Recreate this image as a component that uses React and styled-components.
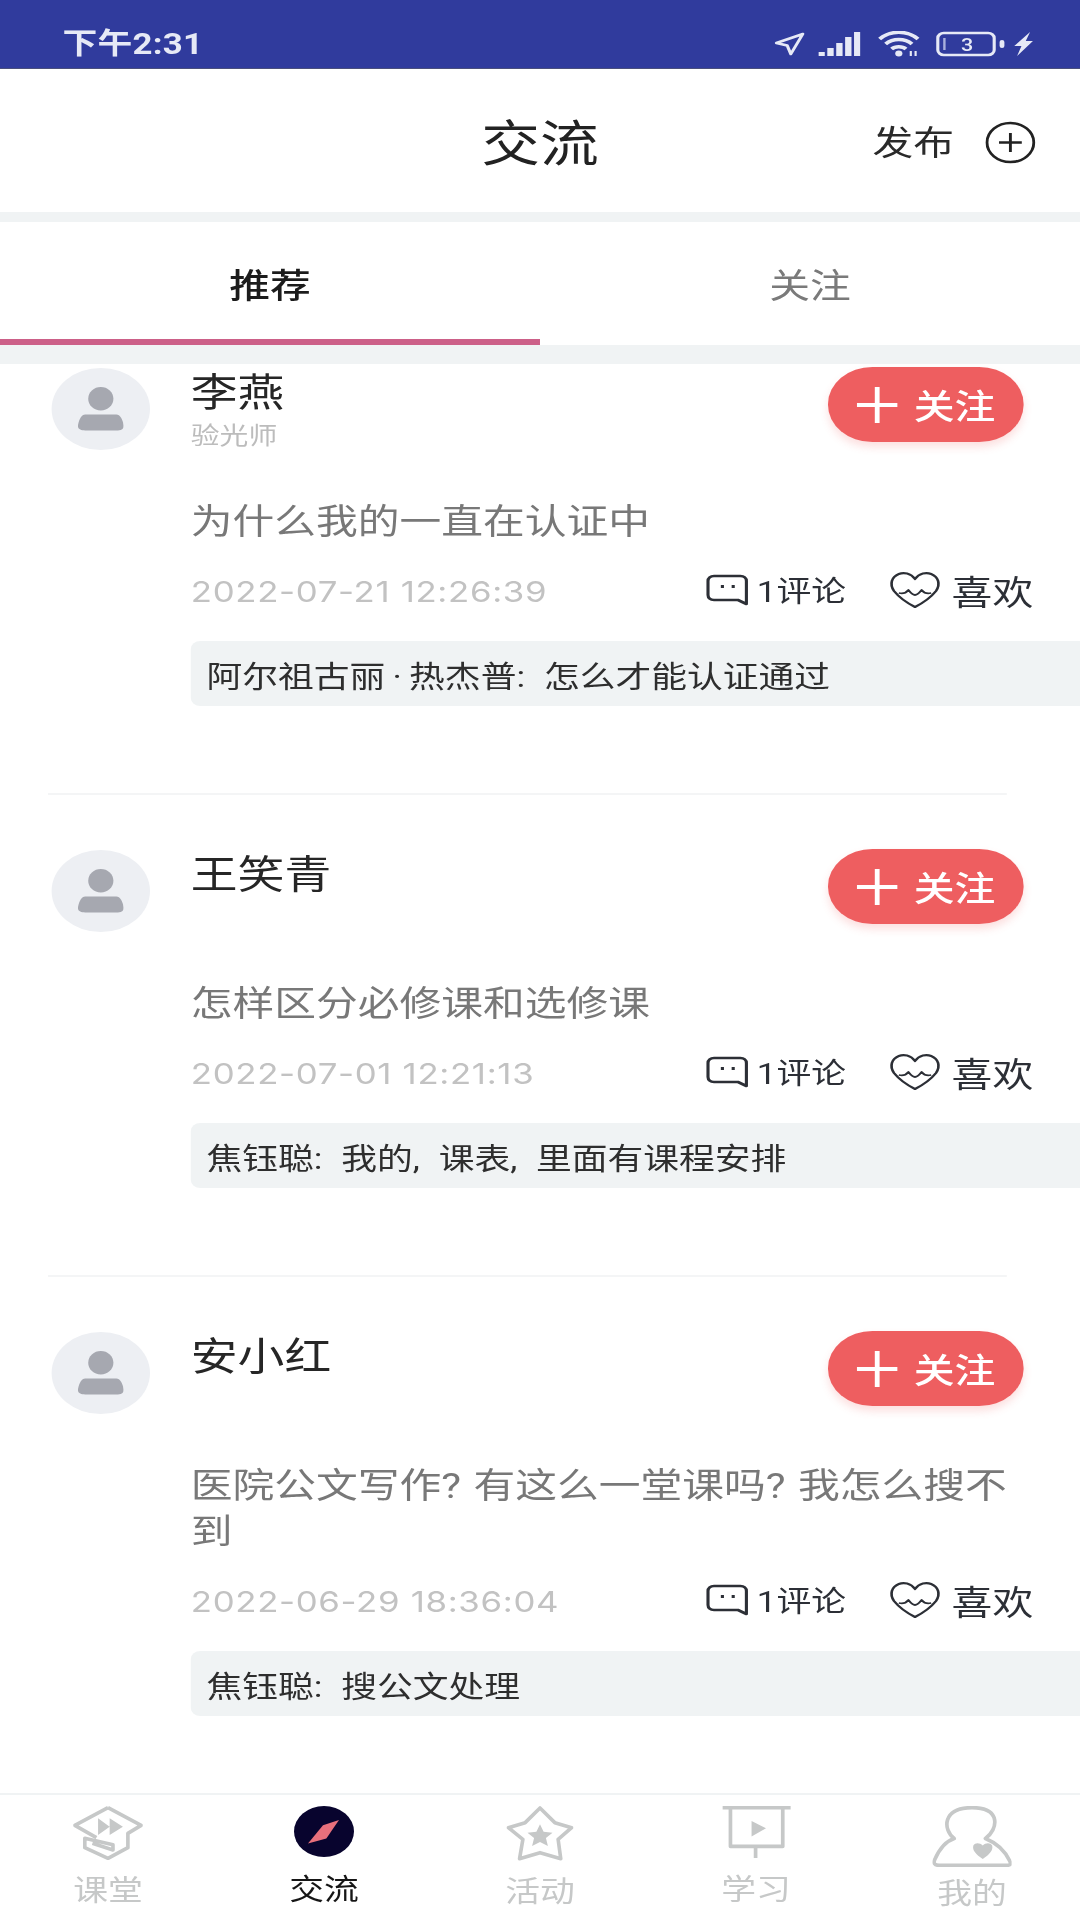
import * as React from "react";
import styled, { createGlobalStyle } from "styled-components";

const GlobalStyle = createGlobalStyle`
    html, body {
        margin: 0;
        padding: 0;
        width: 1080px;
        height: 1920px;
        overflow: hidden;
        background: #ffffff;
    }
    * {
        box-sizing: border-box;
    }
`;

// the reference is a soft, horizontally stretched capture, so the whole page is laid out at 900px and stretched
const Frame = styled.div`
    width: 900px;
    height: 1920px;
    transform: scaleX(1.2);
    transform-origin: 0 0;
    filter: blur(0.5px);
    display: flex;
    flex-direction: column;
    background: #ffffff;
    font-family: Roboto, "Noto Sans CJK SC", sans-serif;
`;

const StatusBar = styled.div`
    height: 69px;
    flex: none;
    background: #303b9d;
    border-bottom: 1px solid #4a4f7c;
    padding: 27px 38px 0 52px;
    display: flex;
    justify-content: space-between;
    align-items: flex-start;
    color: #e6e9f6;
`;

const Time = styled.div`
    font-size: 29px;
    line-height: 34px;
    font-weight: 700;
    letter-spacing: 0.2px;
`;

const StatusIcons = styled.div`
    display: flex;
    align-items: center;
    height: 26px;
    margin-top: 4px;
    svg {
        display: block;
    }
`;

const Header = styled.div`
    height: 143px;
    flex: none;
    display: flex;
    align-items: center;
    justify-content: center;
    position: relative;
    font-size: 49px;
    padding-bottom: 2px;
    color: #222222;
`;

const Publish = styled.div`
    position: absolute;
    right: 37px;
    top: 50px;
    display: flex;
    align-items: center;
    gap: 26px;
    font-size: 34px;
    line-height: 43px;
    color: #2a2a2a;
`;

const PublishLabel = styled.span`
    padding-top: 3px;
`;

const Band = styled.div`
    flex: none;
    height: ${(p) => p.$height}px;
    background: #f0f3f4;
`;

const Tabs = styled.div`
    height: 123px;
    flex: none;
    display: flex;
`;

const Tab = styled.div`
    flex: 1;
    display: flex;
    align-items: center;
    justify-content: center;
    padding-top: 6px;
    font-size: 34px;
    font-weight: ${(p) => (p.$active ? 500 : 400)};
    color: ${(p) => (p.$active ? "#1c1c1c" : "#7a7a7a")};
    border-bottom: 6px solid ${(p) => (p.$active ? "#cc6088" : "transparent")};
`;

const List = styled.div`
    flex: 1;
    min-height: 0;
    overflow: hidden;
`;

const Scroller = styled.div`
    margin-top: -51px;
`;

const Card = styled.div`
    display: flex;
    gap: 34px;
    padding: 55px 0 0 43px;
    position: relative;
    &::after {
        content: "";
        position: absolute;
        left: 40px;
        bottom: 0;
        width: 799px;
        height: 2px;
        background: #f4f5f6;
    }
`;

const Avatar = styled.div`
    width: 82px;
    height: 82px;
    flex: none;
    border-radius: 50%;
    background: #edeff3;
    display: flex;
    align-items: center;
    justify-content: center;
`;

const CardBody = styled.div`
    flex: 1;
    min-width: 0;
    padding-bottom: 89px;
`;

const CardTop = styled.div`
    height: 82px;
    margin-bottom: 49px;
    display: flex;
    justify-content: space-between;
    align-items: flex-start;
    padding-right: 47px;
`;

const Name = styled.div`
    font-size: 39px;
    line-height: 46px;
    margin-top: 2px;
    color: #262626;
`;

const Role = styled.div`
    font-size: 24px;
    line-height: 30px;
    margin-top: 5px;
    color: #bcbcbc;
`;

const FollowButton = styled.div`
    width: 163px;
    height: 75px;
    margin-top: -1px;
    border-radius: 37px;
    background: #ee5e60;
    box-shadow: 0 5px 8px rgba(238, 94, 96, 0.2);
    color: #ffffff;
    display: flex;
    align-items: center;
    justify-content: center;
    gap: 14px;
    font-size: 34px;
    font-weight: 500;
    svg {
        display: block;
    }
`;

const Question = styled.div`
    font-size: 34.8px;
    line-height: 46px;
    word-spacing: 0.05em;
    color: #787878;
    padding-right: 45px;
`;

const Meta = styled.div`
    height: 60px;
    margin-top: 15px;
    display: flex;
    align-items: center;
    padding-right: 39px;
`;

const DateText = styled.div`
    font-family: Inter, sans-serif;
    font-size: 29px;
    letter-spacing: 0.55px;
    color: #c2c2c2;
    margin-right: auto;
    padding-top: 2px;
`;

const MetaItem = styled.div`
    display: flex;
    align-items: center;
    gap: ${(p) => p.$gap}px;
    margin-left: ${(p) => p.$left}px;
    font-size: ${(p) => p.$size}px;
    line-height: 40px;
    color: #2c2f36;
    svg {
        display: block;
        flex: none;
    }
`;

const MetaLabel = styled.span`
    padding-top: ${(p) => p.$drop}px;
`;

const Reply = styled.div`
    height: 65px;
    margin-top: 21px;
    padding-left: 13px;
    background: #f0f3f4;
    border-radius: 8px 0 0 8px;
    display: flex;
    align-items: center;
    font-size: 29.8px;
    word-spacing: 0.28em;
    color: #2e2e2e;
    white-space: pre;
`;

const BottomNav = styled.div`
    height: 127px;
    flex: none;
    display: grid;
    grid-template-columns: repeat(5, 1fr);
    border-top: 2px solid #f0f3f4;
    background: #ffffff;
`;

const NavItem = styled.div`
    display: flex;
    flex-direction: column;
    align-items: center;
    font-size: 29px;
    line-height: 34px;
    color: ${(p) => (p.$active ? "#161616" : "#c6c8c8")};
`;

const NavIcon = styled.div`
    height: 82px;
    padding-top: 11px;
    svg {
        display: block;
    }
`;

const NavLabel = styled.div`
    margin-top: ${(p) => p.$offset || 0}px;
`;

const LocationIcon = () => (
    <svg width="26" height="24" viewBox="0 0 26 24" fill="none" stroke="#e6e9f6" strokeWidth="2.6" strokeLinejoin="round">
        <path d="M24 2 L2 11 L11 13.5 L14 22 Z" />
    </svg>
);

const SignalIcon = () => (
    <svg width="35" height="26" viewBox="0 0 33 26" preserveAspectRatio="none" fill="#e6e9f6" style={{ marginLeft: 11 }}>
        <rect x="0" y="21" width="5" height="4" />
        <rect x="7" y="17" width="5" height="8" />
        <rect x="14" y="12" width="5" height="13" />
        <rect x="21" y="6" width="5" height="19" />
        <rect x="28" y="1" width="5" height="24" />
    </svg>
);

const WifiIcon = () => (
    <svg width="37" height="26" viewBox="0 0 37 26" fill="none" stroke="#e6e9f6" strokeWidth="3.4" style={{ marginLeft: 14 }}>
        <path d="M2 8 C11 -1 25 -1 34 8" />
        <path d="M7 13 C13 7 23 7 29 13" />
        <path d="M12 18 C15 15 21 15 24 18" />
        <circle cx="18" cy="22.5" r="3" fill="#e6e9f6" stroke="none" />
        <path d="M28 20 V25 M32 20 V25" strokeWidth="1.8" />
    </svg>
);

const BatteryIcon = () => (
    <svg width="58" height="26" viewBox="0 0 58 26" fill="none" style={{ marginLeft: 12 }}>
        <rect x="1.5" y="2" width="47" height="22" rx="5" stroke="#e6e9f6" strokeWidth="2.6" />
        <rect x="53" y="9" width="4" height="8" rx="2" fill="#e6e9f6" />
        <rect x="6" y="7" width="2" height="12" fill="#a9b0dc" />
        <text x="26" y="20" fontSize="18" fontWeight="500" textAnchor="middle" fill="#e6e9f6" fontFamily="Roboto, sans-serif">3</text>
    </svg>
);

const BoltIcon = () => (
    <svg width="18" height="24" viewBox="0 0 15 24" preserveAspectRatio="none" fill="#e6e9f6" style={{ marginLeft: 6 }}>
        <path d="M12 0 L1 14 H6 L3 24 L14 9 H9 Z" />
    </svg>
);

const PlusCircleIcon = () => (
    <svg width="42" height="43" viewBox="0 0 42 43" fill="none" stroke="#222222" strokeWidth="2.4">
        <circle cx="21" cy="21.5" r="19.5" />
        <path d="M21 12 V31 M11.5 21.5 H30.5" />
    </svg>
);

const PersonIcon = () => (
    <svg width="38" height="44" viewBox="0 0 38 44" fill="#a6a8b0">
        <ellipse cx="19" cy="11.7" rx="10.5" ry="11.7" />
        <path d="M6 27.5 H32 C35 27.5 37 32 38 38 C38.5 42 36 43.5 32 43.5 H6 C2 43.5 -0.5 42 0 38 C1 32 3 27.5 6 27.5 Z" />
    </svg>
);

const FollowPlus = () => (
    <svg width="34" height="36" viewBox="0 0 34 36" fill="none" stroke="#ffffff" strokeWidth="4">
        <path d="M17 0 V36 M0 18 H34" />
    </svg>
);

const CommentIcon = () => (
    <svg width="36" height="32" viewBox="0 0 36 32" fill="none" stroke="#2c2f36" strokeWidth="2.6" strokeLinejoin="round">
        <path d="M7 2 H29 C32 2 34 4 34 7 V30 L27 26 H7 C4 26 2 24 2 21 V7 C2 4 4 2 7 2 Z" />
        <path d="M14 11 V14 M23 11 V14" />
    </svg>
);

const HeartIcon = () => (
    <svg width="43" height="38" viewBox="0 0 43 38" fill="none" stroke="#2c2f36" strokeWidth="2.2" strokeLinejoin="round">
        <path d="M21.5 8 C18 2 12 1 8 3 C2 6 0 13 4 20 C8 26 15 32 21.5 36 C28 32 35 26 39 20 C43 13 41 6 35 3 C31 1 25 2 21.5 8 Z" />
        <path d="M8 22 C11 23 14 22 16 19 C18 22 20 24 21.5 24 C23 24 25 22 27 19 C29 22 32 23 35 22" strokeWidth="1.8" />
    </svg>
);

const CourseIcon = () => (
    <svg width="58" height="54" viewBox="0 0 210 162" preserveAspectRatio="none" fill="none" stroke="#c6c8c8" strokeWidth="11" strokeLinejoin="round">
        <path d="M105 5 L205 58 L165 82 V125 L105 157 L35 125 V97 L120 116 V132 L58 112" />
        <path d="M105 5 L5 58 L70 95" />
        <path d="M75 37 L110 62 L75 87 Z M110 37 L150 62 L110 87 Z" fill="#c6c8c8" stroke="none" />
    </svg>
);

const CompassIcon = () => (
    <svg width="50" height="51" viewBox="0 0 180 152" preserveAspectRatio="none">
        <ellipse cx="90" cy="76" rx="90" ry="76" fill="#08042e" />
        <path d="M135 42 L87 57 L42 112 L97 97 Z" fill="#e8707c" />
    </svg>
);

const StarIcon = () => (
    <svg width="56" height="55" viewBox="0 0 204 165" preserveAspectRatio="none" fill="none" stroke="#c6c8c8" strokeWidth="11" strokeLinejoin="round">
        <path d="M102 6 L147 50 L198 65 L157 100 L165 158 L102 140 L40 158 L50 100 L6 65 L57 50 Z" />
        <path d="M102 55 L113 77 L140 80 L120 96 L126 120 L102 108 L78 120 L84 96 L64 80 L91 77 Z" fill="#c6c8c8" stroke="none" />
    </svg>
);

const BoardIcon = () => (
    <svg width="57" height="52" viewBox="0 0 204 157" preserveAspectRatio="none" fill="none" stroke="#c6c8c8" strokeWidth="11">
        <path d="M0 5 H204" />
        <path d="M24 5 V122 H180 V5" strokeLinejoin="round" />
        <path d="M99 122 V157" />
        <path d="M87 45 L130 67 L87 92 Z" fill="#c6c8c8" stroke="none" />
    </svg>
);

const MineIcon = () => (
    <svg width="66" height="61" viewBox="0 0 236 182" preserveAspectRatio="none" fill="none" stroke="#c6c8c8" strokeWidth="11" strokeLinejoin="round">
        <path d="M65 97 C30 70 30 5 118 5 C206 5 196 70 158 97 C190 110 215 130 231 165 C236 175 230 177 220 177 H20 C6 177 2 170 7 160 C20 130 40 105 65 97 Z" />
        <path d="M150 158 C130 145 118 132 122 118 C128 108 142 110 150 118 C158 110 172 108 178 118 C182 132 170 145 150 158 Z" fill="#c6c8c8" stroke="none" />
    </svg>
);

const posts = [
    {
        name: "李燕",
        role: "验光师",
        question: "为什么我的一直在认证中",
        date: "2022-07-21 12:26:39",
        reply: "阿尔祖古丽\u2009·\u2009热杰普: 怎么才能认证通过",
    },
    {
        name: "王笑青",
        question: "怎样区分必修课和选修课",
        date: "2022-07-01 12:21:13",
        reply: "焦钰聪: 我的, 课表, 里面有课程安排",
    },
    {
        name: "安小红",
        question: "医院公文写作? 有这么一堂课吗? 我怎么搜不到",
        date: "2022-06-29 18:36:04",
        reply: "焦钰聪: 搜公文处理",
    },
];

const navItems = [
    { label: "课堂", icon: <CourseIcon />, offset: -3 },
    { label: "交流", icon: <CompassIcon />, active: true, offset: -4 },
    { label: "活动", icon: <StarIcon />, offset: -2 },
    { label: "学习", icon: <BoardIcon />, offset: -4 },
    { label: "我的", icon: <MineIcon />, offset: 0 },
];

class App extends React.Component {
    render() {
        return <Frame>
            <GlobalStyle />
            <StatusBar>
                <Time>下午2:31</Time>
                <StatusIcons>
                    <LocationIcon />
                    <SignalIcon />
                    <WifiIcon />
                    <BatteryIcon />
                    <BoltIcon />
                </StatusIcons>
            </StatusBar>
            <Header>
                交流
                <Publish>
                    <PublishLabel>发布</PublishLabel>
                    <PlusCircleIcon />
                </Publish>
            </Header>
            <Band $height={10} />
            <Tabs>
                <Tab $active>推荐</Tab>
                <Tab>关注</Tab>
            </Tabs>
            <Band $height={19} />
            <List>
                <Scroller>
                    {posts.map((post) => (
                        <Card key={post.name}>
                            <Avatar>
                                <PersonIcon />
                            </Avatar>
                            <CardBody>
                                <CardTop>
                                    <div>
                                        <Name>{post.name}</Name>
                                        {post.role && <Role>{post.role}</Role>}
                                    </div>
                                    <FollowButton>
                                        <FollowPlus />
                                        关注
                                    </FollowButton>
                                </CardTop>
                                <Question>{post.question}</Question>
                                <Meta>
                                    <DateText>{post.date}</DateText>
                                    <MetaItem $gap={7} $size={29}>
                                        <CommentIcon />
                                        <MetaLabel $drop={3}>1评论</MetaLabel>
                                    </MetaItem>
                                    <MetaItem $gap={9} $size={34} $left={36}>
                                        <HeartIcon />
                                        <MetaLabel $drop={5}>喜欢</MetaLabel>
                                    </MetaItem>
                                </Meta>
                                <Reply>{post.reply}</Reply>
                            </CardBody>
                        </Card>
                    ))}
                </Scroller>
            </List>
            <BottomNav>
                {navItems.map((item) => (
                    <NavItem key={item.label} $active={item.active}>
                        <NavIcon>{item.icon}</NavIcon>
                        <NavLabel $offset={item.offset}>{item.label}</NavLabel>
                    </NavItem>
                ))}
            </BottomNav>
        </Frame>;
    }
}

export default App;
